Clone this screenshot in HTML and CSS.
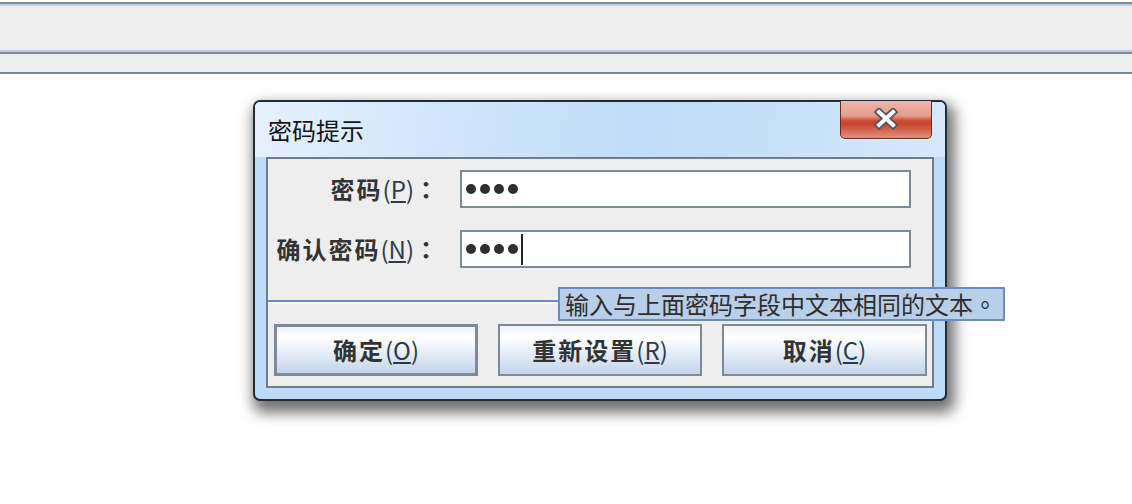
FILE: index.html
```html
<!DOCTYPE html>
<html lang="zh-CN">
<head>
<meta charset="utf-8">
<title>密码提示</title>
<link rel="stylesheet" href="styles.css">
</head>
<body>
<div class="toolbar"></div>
<div class="subbar"></div>
<div class="desktop">
  <div class="dialog">
    <div class="titlebar">
      <span class="title">密码提示</span>
      <button class="close" aria-label="关闭">
        <svg width="26" height="22" viewBox="0 0 26 22">
          <path d="M6 4 L20 17 M20 4 L6 17" stroke="#50555f" stroke-width="7.5" stroke-linecap="square" fill="none"/>
          <path d="M6 4 L20 17 M20 4 L6 17" stroke="#ffffff" stroke-width="4" stroke-linecap="square" fill="none"/>
        </svg>
      </button>
    </div>
    <div class="panel">
      <div class="form">
        <label class="lbl">密码<span class="mn">(<u>P</u>)</span><span class="pc" lang="zh-TW">：</span></label>
        <div class="field"><span class="dot"></span><span class="dot"></span><span class="dot"></span><span class="dot"></span></div>
        <label class="lbl">确认密码<span class="mn">(<u>N</u>)</span><span class="pc" lang="zh-TW">：</span></label>
        <div class="field"><span class="dot"></span><span class="dot"></span><span class="dot"></span><span class="dot"></span><span class="caret"></span></div>
      </div>
      <div class="sep"></div>
      <div class="buttons">
        <button class="btn btn-default">确定<span class="mn">(<u>O</u>)</span></button>
        <button class="btn">重新设置<span class="mn">(<u>R</u>)</span></button>
        <button class="btn btn-last">取消<span class="mn">(<u>C</u>)</span></button>
      </div>
    </div>
    <div class="tooltip">输入与上面密码字段中文本相同的文本<span class="pc" lang="zh-TW">。</span></div>
  </div>
</div>
</body>
</html>
```
FILE: styles.css
```css
* { box-sizing: border-box; }
html, body { margin: 0; padding: 0; background: #ffffff; }
body { font-family: "Noto Sans CJK SC", "Noto Sans", sans-serif; color: #333; min-height: 504px; }

.toolbar {
  margin-top: 2px;
  height: 52px;
  background: #eeeded;
  border-top: 2px solid #7b8898;
  border-bottom: 2px solid #7b8898;
  box-shadow: inset 0 2px 0 #b9cde6, inset 0 -2px 0 #b9cde6;
}
.subbar {
  height: 20px;
  background: #eeeded;
  border-bottom: 2px solid #7b8898;
}

.desktop { padding: 26px 0 40px 253px; }

.dialog {
  position: relative;
  width: 694px;
  height: 301px;
  border: 2px solid #232b33;
  border-radius: 7px;
  padding: 0 11px 11px;
  background: #bddbf7;
  box-shadow: 4px 8px 14px 4px rgba(0,0,0,0.55);
}

.titlebar {
  display: flex;
  align-items: center;
  height: 55px;
  margin: 0 -11px;
  padding-left: 13px;
  border-radius: 5px 5px 0 0;
  background: linear-gradient(100deg, #e6f0fc 0%, #d3e7fb 25%, #bfdcf8 55%, #c6e0f9 75%, #d6e9fb 100%);
}
.title {
  font-size: 24px;
  line-height: 1;
  color: #151515;
}
.close {
  align-self: flex-start;
  margin: -1px 13px 0 auto;
  width: 92px;
  height: 38px;
  padding: 0;
  border: 1px solid #6a2a22;
  border-top: none;
  border-radius: 0 0 5px 5px;
  background: linear-gradient(#eeb6ab 0%, #e59d8d 40%, #cf5039 52%, #c8442d 62%, #e3907f 100%);
  box-shadow: 0 1px 0 #f4f8fd;
  display: flex;
  align-items: center;
  justify-content: center;
}
.close svg { display: block; margin-top: -1px; }

.panel {
  height: 231px;
  border: 2px solid #6f7c8b;
  background: #eeeeee;
}

.form {
  display: grid;
  grid-template-columns: 172px 451px;
  grid-auto-rows: 38px;
  column-gap: 20px;
  row-gap: 22px;
  padding-top: 11px;
}
.lbl {
  align-self: center;
  text-align: right;
  font-size: 24px;
  font-weight: bold;
  line-height: 1;
  letter-spacing: 2px;
  color: #333;
  white-space: nowrap;
}
.mn { font-weight: normal; letter-spacing: 0; color: #2f3a4a; }
.mn u { text-underline-offset: 2px; }
.pc { font-family: "Noto Sans CJK TC", "Noto Sans CJK SC", sans-serif; }

.field {
  display: flex;
  align-items: center;
  gap: 4px;
  padding-left: 4px;
  border: 2px solid #7d8a99;
  background: #ffffff;
}
.dot {
  width: 10px;
  height: 10px;
  border-radius: 50%;
  background: #2e2e33;
}
.caret {
  width: 2px;
  height: 31px;
  margin-left: -1px;
  background: #222;
}

.sep {
  margin-top: 32px;
  height: 4px;
  border-top: 2px solid #6d8ac4;
  border-bottom: 2px solid #f7f7f7;
}

.buttons {
  display: flex;
  gap: 20px;
  margin-top: 20px;
  padding-left: 6px;
}
.btn {
  width: 204px;
  height: 52px;
  padding: 0;
  border: 2px solid #7d8a99;
  background: linear-gradient(#eef3f9 0%, #ffffff 22%, #e6eef7 55%, #c3d4e8 100%);
  font-family: "Noto Sans CJK SC", "Noto Sans", sans-serif;
  font-size: 24px;
  font-weight: bold;
  letter-spacing: 2px;
  color: #333;
  line-height: 1;
}
.btn-default { border-width: 3px; }
.btn-last { width: 205px; }

.tooltip {
  position: absolute;
  left: 303px;
  top: 185px;
  width: 447px;
  height: 34px;
  padding-left: 5px;
  border: 2px solid #6d8ac4;
  background: #b8cfe9;
  font-size: 24px;
  line-height: 29px;
  color: #2e2e2e;
  white-space: nowrap;
}
```
